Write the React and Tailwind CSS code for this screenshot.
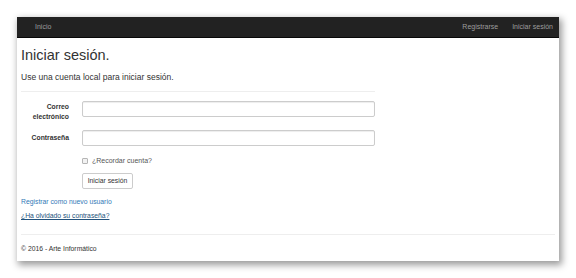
export default function App() {
  return (
    <div className="w-[576px] h-[278px] bg-white pl-[17px] pt-[17px] font-['Liberation_Sans',Arial,sans-serif]">
      <div className="w-[542px] h-[244px] bg-white flex flex-col shadow-[2px_3px_7px_1px_rgba(0,0,0,0.4)]">
        <nav className="h-[21px] bg-[#222222] border-b border-[#080808] flex items-center pl-[18px] pr-[6px] text-[7px] text-[#9d9d9d]">
          <span>Inicio</span>
          <div className="ml-auto flex gap-[14px]">
            <span>Registrarse</span>
            <span>Iniciar sesión</span>
          </div>
        </nav>

        <div className="px-[4px] flex-1 flex flex-col text-[#333333]">
          <h2 className="text-[14.5px] leading-[20px] mt-[7px]">Iniciar sesión.</h2>
          <h4 className="text-[8.5px] leading-[12px] mt-[6px]">Use una cuenta local para iniciar sesión.</h4>
          <hr className="w-[354px] mt-[8px] border-[#eeeeee]" />

          <div className="mt-[9px] flex flex-col gap-[8px] text-[6.8px]">
            <div className="flex items-start">
              <label className="w-[48px] text-right font-bold leading-[10px] pt-[1px]">
                Correo<br />electrónico
              </label>
              <input className="ml-[13px] w-[293px] h-[16px] border border-[#cccccc] rounded-[2px] shadow-[inset_0_1px_1px_rgba(0,0,0,0.075)]" />
            </div>
            <div className="flex items-center">
              <label className="w-[48px] text-right font-bold">Contraseña</label>
              <input type="password" className="ml-[13px] w-[293px] h-[16px] border border-[#cccccc] rounded-[2px] shadow-[inset_0_1px_1px_rgba(0,0,0,0.075)]" />
            </div>
          </div>

          <div className="ml-[61px] mt-[11px] h-[8px] flex items-center gap-[4px] text-[7px] text-[#555555]">
            <span className="w-[6px] h-[6px] border border-[#b5b5b5] rounded-[1px] bg-[#f2f2f2]" />
            <span>¿Recordar cuenta?</span>
          </div>

          <button className="ml-[61px] mt-[8px] w-[51px] h-[16px] border border-[#cccccc] rounded-[2px] bg-white text-[6.8px] text-[#333333]">
            Iniciar sesión
          </button>

          <a className="mt-[8px] text-[6.8px] leading-[9px] text-[#337ab7]">Registrar como nuevo usuario</a>
          <a className="mt-[5px] text-[6.8px] leading-[9px] text-[#23527c] underline">¿Ha olvidado su contraseña?</a>

          <hr className="mt-[14px] border-[#eeeeee]" />
          <footer className="mt-[9px] text-[6.8px] leading-[9px]">© 2016 - Arte Informático</footer>
        </div>
      </div>
    </div>
  );
}
